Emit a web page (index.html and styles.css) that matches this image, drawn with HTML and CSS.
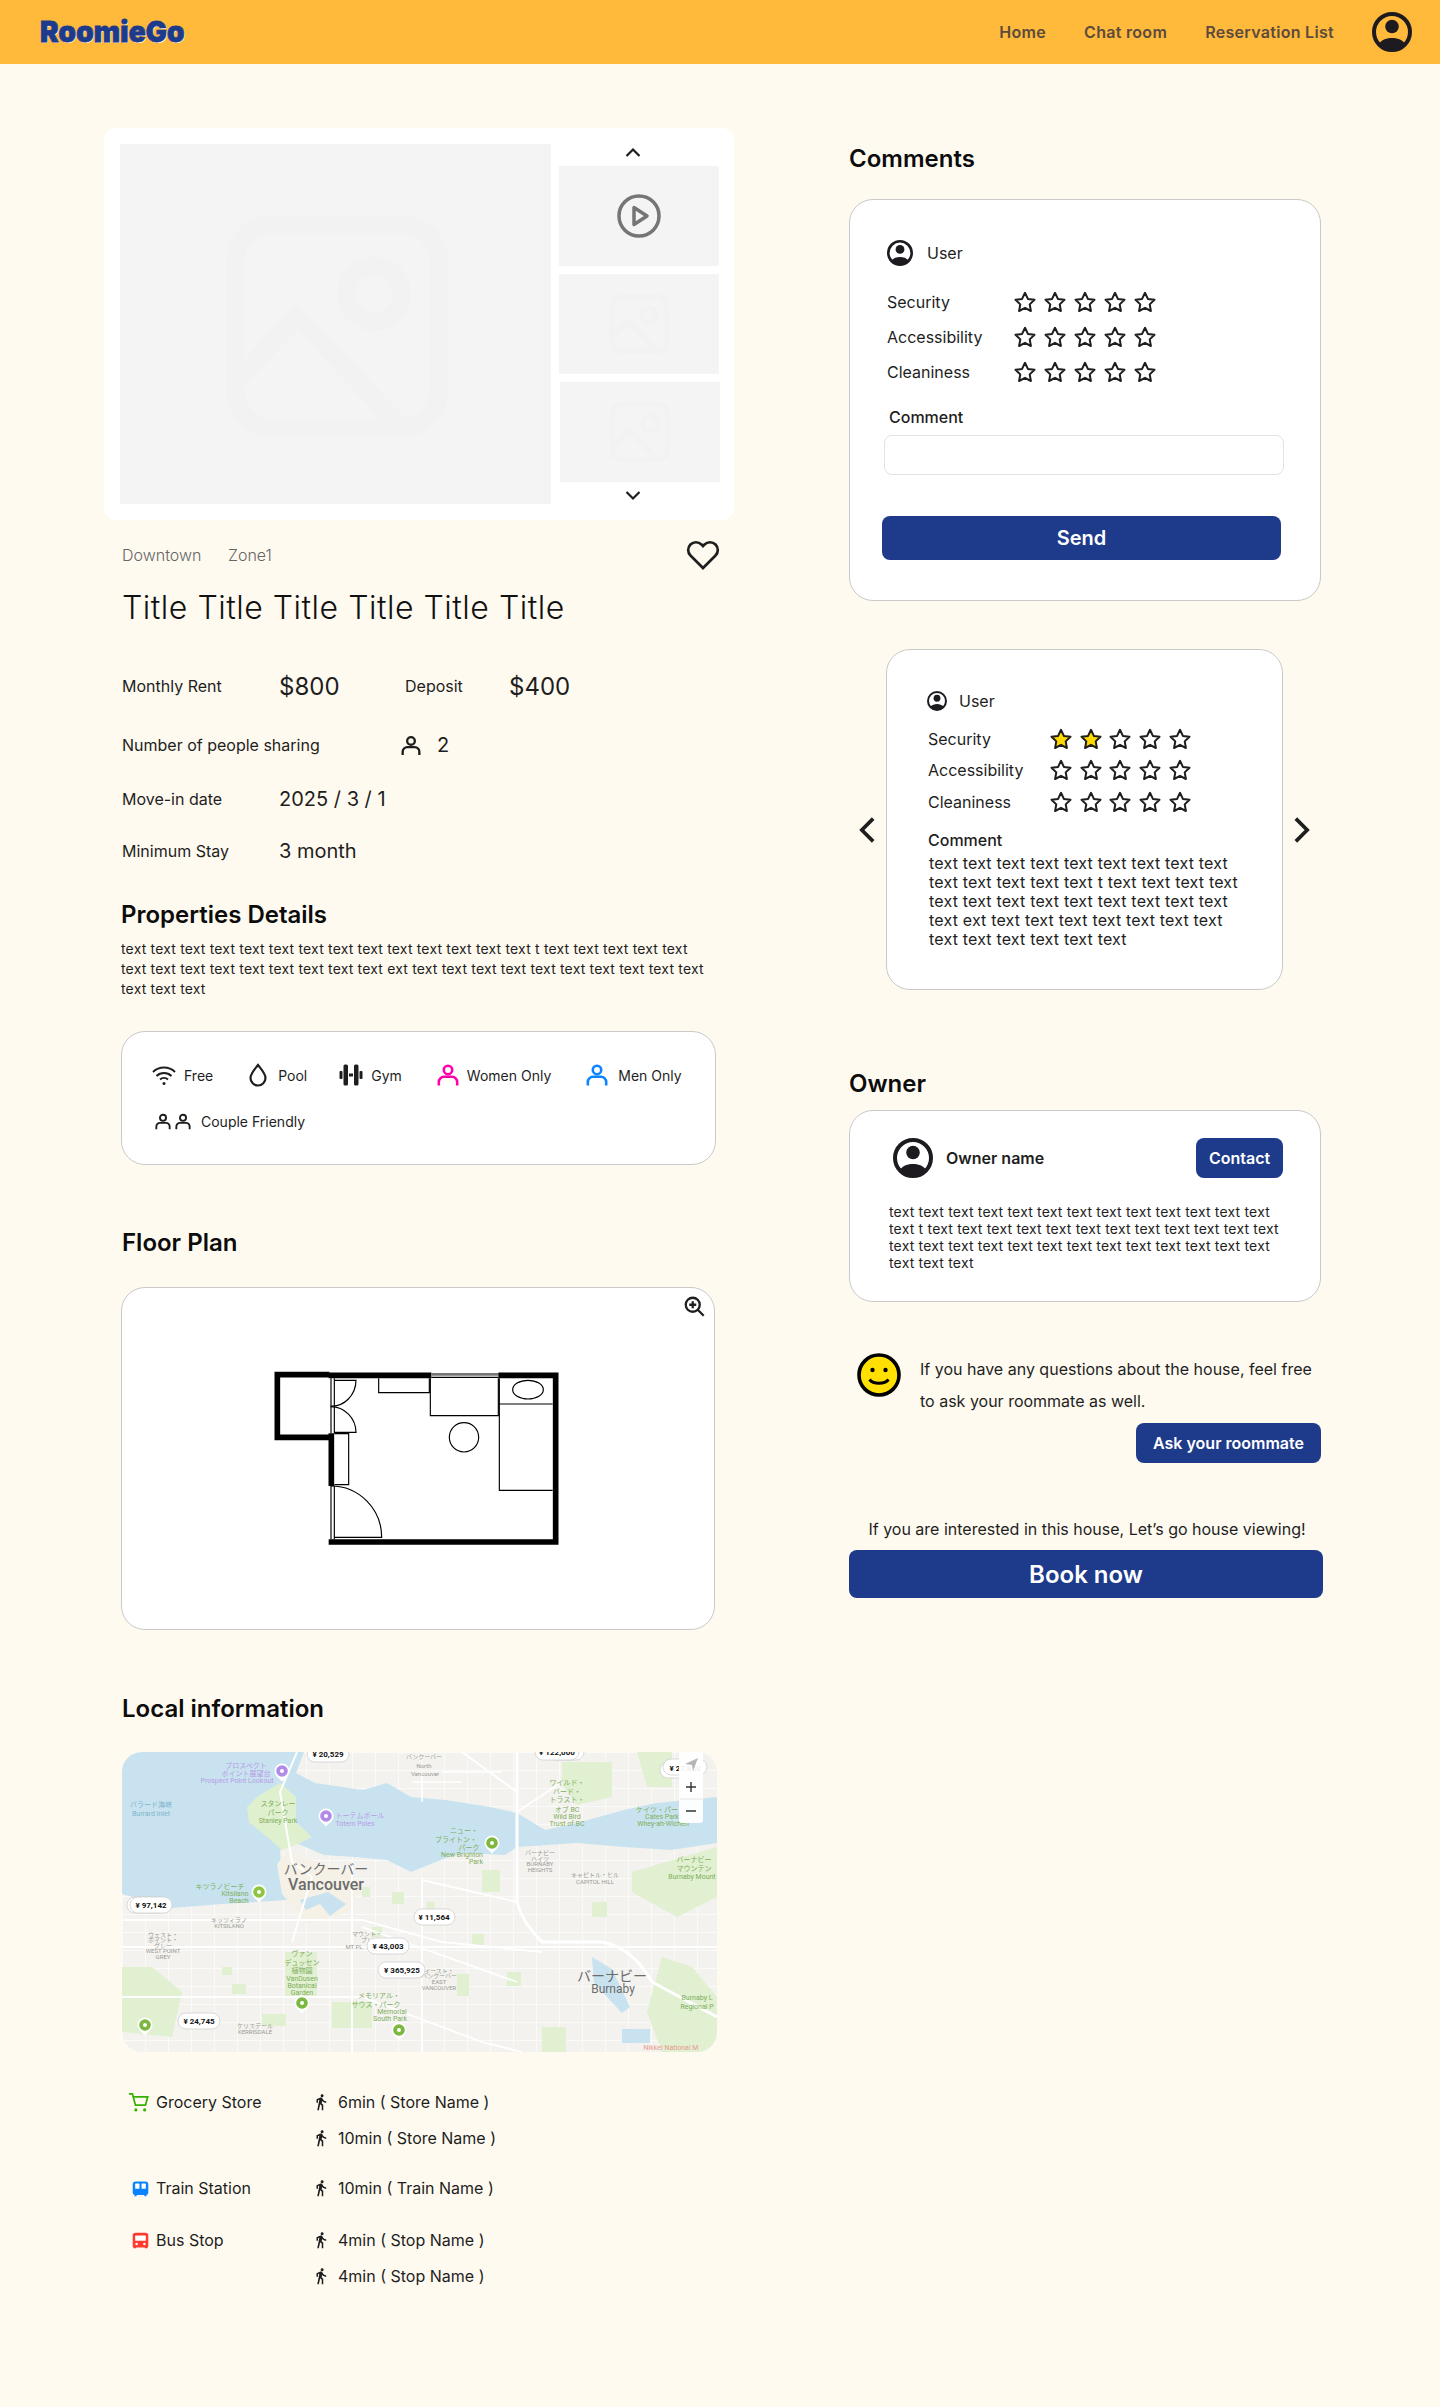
FILE: index.html
```html
<!DOCTYPE html>
<html lang="en">
<head>
    <meta charset="UTF-8">
    <meta name="viewport" content="width=device-width, initial-scale=1.0">
    <title>RoomieGo</title>
    <link rel="stylesheet" href="styles.css">
</head>
<body>
    <svg class="icon-defs" xmlns="http://www.w3.org/2000/svg">
        <symbol id="avatar" viewBox="0 0 40 40">
            <circle cx="20" cy="20" r="18" fill="none" stroke="#1d1b20" stroke-width="4"/>
            <circle cx="20" cy="14.5" r="6.8" fill="#1d1b20"/>
            <path d="M6.5 32C10 27.5 15 26 20 26s10 1.500 13.500 6C30 36 25 38 20 38S10 36 6.500 32z" fill="#1d1b20"/>
        </symbol>
        <symbol id="star" viewBox="0 0 24 24">
            <path d="M12 2.800l2.900 6.100 6.600.9-4.800 4.600 1.200 6.600-5.900-3.200-5.900 3.200 1.200-6.600-4.800-4.600 6.600-.9z" stroke="#1e1e1e" stroke-width="2" stroke-linejoin="round"/>
        </symbol>
        <symbol id="person" viewBox="0 0 24 24">
            <circle cx="12" cy="6.500" r="4.600" fill="none" stroke="currentColor" stroke-width="2.800"/>
            <path d="M2 23.500v-4a5.500 5.500 0 0 1 5.500-5.500h9a5.500 5.500 0 0 1 5.500 5.500v4" fill="none" stroke="currentColor" stroke-width="2.800"/>
        </symbol>
        <symbol id="walk" viewBox="0 0 24 24">
            <path d="M13.500 5.500c1.100 0 2-.9 2-2s-.9-2-2-2-2 .9-2 2 .9 2 2 2zM9.800 8.900L7 23h2.100l1.800-8 2.100 2v6h2v-7.500l-2.100-2 .6-3C14.800 12 16.800 13 19 13v-2c-1.900 0-3.500-1-4.300-2.400l-1-1.600c-.4-.6-1-1-1.700-1-.3 0-.5.1-.8.1L6 8.300V13h2V9.600l1.800-.7" fill="#1e1e1e"/>
        </symbol>
        <symbol id="picture" viewBox="0 0 24 24">
            <g fill="none" stroke="#f2f2f2" stroke-width="2">
                <rect x="1" y="1" width="22" height="22" rx="4"/>
                <circle cx="16" cy="8.500" r="3"/>
                <path d="M1.500 17.500L7.700 11l11.300 12"/>
            </g>
        </symbol>
    </svg>

    <header class="topbar">
        <a class="logo">RoomieGo</a>
        <nav class="nav">
            <a>Home</a>
            <a>Chat room</a>
            <a>Reservation List</a>
            <svg class="nav-avatar"><use href="#avatar"/></svg>
        </nav>
    </header>

    <main class="page">
        <section class="left">
            <div class="gallery">
                <div class="gallery-main">
                    <svg class="placeholder-big"><use href="#picture"/></svg>
                </div>
                <div class="gallery-side">
                    <svg class="chev-small chev-up" viewBox="0 0 16 16"><path d="M1.500 12L8 5.500l6.500 6.500" fill="none" stroke="#1e1e1e" stroke-width="2.200"/></svg>
                    <div class="thumb">
                        <svg class="play" viewBox="0 0 44 44">
                            <circle cx="22" cy="22" r="20" fill="none" stroke="#757575" stroke-width="3.500"/>
                            <path d="M17 13.500L30 22l-13 8.500z" fill="none" stroke="#757575" stroke-width="3.500" stroke-linejoin="round"/>
                        </svg>
                    </div>
                    <div class="thumb"><svg class="placeholder-small"><use href="#picture"/></svg></div>
                    <div class="thumb thumb-last"><svg class="placeholder-small"><use href="#picture"/></svg></div>
                    <svg class="chev-small chev-down" viewBox="0 0 16 16"><path d="M1.500 4L8 10.500 14.500 4" fill="none" stroke="#1e1e1e" stroke-width="2.200"/></svg>
                </div>
            </div>

            <div class="crumbs">
                <span class="crumb-one">Downtown</span>
                <span>Zone1</span>
                <svg class="heart" viewBox="0 0 24 24"><path d="M20.840 4.610a5.500 5.500 0 0 0-7.780 0L12 5.670l-1.060-1.060a5.500 5.500 0 0 0-7.780 7.780l1.060 1.060L12 21.230l7.780-7.780 1.060-1.060a5.500 5.500 0 0 0 0-7.780z" fill="none" stroke="#1e1e1e" stroke-width="1.900"/></svg>
            </div>
            <h1 class="title">Title Title Title Title Title Title</h1>

            <div class="stat stat-rent">
                <span class="stat-label">Monthly Rent</span>
                <span class="stat-price">$800</span>
                <span class="stat-deposit">Deposit</span>
                <span class="stat-price">$400</span>
            </div>
            <div class="stat stat-share">
                <span class="stat-label-wide">Number of people sharing</span>
                <svg class="share-icon"><use href="#person"/></svg>
                <span class="stat-value">2</span>
            </div>
            <div class="stat stat-date">
                <span class="stat-label">Move-in date</span>
                <span class="stat-value">2025 / 3 / 1</span>
            </div>
            <div class="stat stat-stay">
                <span class="stat-label">Minimum Stay</span>
                <span class="stat-value">3 month</span>
            </div>

            <h2 class="heading details-heading">Properties Details</h2>
            <p class="details-text">text text text text text text text text text text text text text text t text text text text text<br>text text text text text text text text text ext text text text text text text text text text text<br>text text text</p>

            <div class="amenities">
                <div class="amenity-row">
                    <span class="amenity am-free">
                        <svg class="am-icon" viewBox="0 0 24 24"><g fill="none" stroke="#1e1e1e" stroke-width="2"><path d="M1 9a16 16 0 0 1 22 0"/><path d="M4.500 13a11 11 0 0 1 15 0"/><path d="M8 16.500a6 6 0 0 1 8 0"/></g><circle cx="12" cy="20.500" r="1.500" fill="#1e1e1e"/></svg>
                        Free
                    </span>
                    <span class="amenity am-pool">
                        <svg class="am-icon" viewBox="0 0 24 24"><path d="M12 2c3 4 7.500 8.500 7.500 13a7.500 7.500 0 0 1-15 0C4.500 10.500 9 6 12 2z" fill="none" stroke="#1e1e1e" stroke-width="2.200"/></svg>
                        Pool
                    </span>
                    <span class="amenity am-gym">
                        <svg class="am-icon" viewBox="0 0 24 24" fill="#1e1e1e"><rect x="0.500" y="8" width="3" height="8" rx="1"/><rect x="4.500" y="1.500" width="4.500" height="21" rx="1.500"/><rect x="10" y="10.500" width="4" height="3"/><rect x="15" y="1.500" width="4.500" height="21" rx="1.500"/><rect x="20.500" y="8" width="3" height="8" rx="1"/></svg>
                        Gym
                    </span>
                    <span class="amenity am-women">
                        <svg class="am-person am-pink"><use href="#person"/></svg>
                        Women Only
                    </span>
                    <span class="amenity am-men">
                        <svg class="am-person am-blue"><use href="#person"/></svg>
                        Men Only
                    </span>
                </div>
                <div class="amenity-row amenity-row-2">
                    <span class="amenity am-couple">
                        <span class="couple-icons">
                            <svg class="am-person-small"><use href="#person"/></svg>
                            <svg class="am-person-small"><use href="#person"/></svg>
                        </span>
                        Couple Friendly
                    </span>
                </div>
            </div>

            <h2 class="heading floor-heading">Floor Plan</h2>
            <div class="floor-card">
                <svg class="zoom-icon" viewBox="0 0 24 24"><circle cx="10" cy="10" r="8" fill="none" stroke="#1e1e1e" stroke-width="2.600"/><path d="M10 6v8M6 10h8M16 16l6.500 6.500" fill="none" stroke="#1e1e1e" stroke-width="2.600"/></svg>
                <svg class="floor-plan" viewBox="-354 54 1776 1023">
                    <g fill="none" stroke="#000">
                        <path d="M268 314H112V502H268" stroke-width="17"/>
                        <path d="M266 316H574" stroke-width="17"/>
                        <path d="M574 313H775" stroke="#777" stroke-width="8"/>
                        <path d="M574 322H775" stroke-width="4"/>
                        <path d="M775 316H947V816H266" stroke-width="17"/>
                        <path d="M274 490V648" stroke-width="17"/>
                        <g stroke-width="3.500">
                            <path d="M273 325V490M283 325V490M273 648V808M283 648V808"/>
                            <path d="M283 331H348A72 78 0 0 1 272 408"/>
                            <path d="M272 410A76 78 0 0 1 348 487H283"/>
                            <path d="M283 491H326V644H283"/>
                            <path d="M272 648A152 154 0 0 1 425 802H283"/>
                            <path d="M416 325V368H568V325"/>
                            <path d="M571 325V437H775V325"/>
                            <circle cx="672" cy="502" r="44"/>
                            <path d="M778 325V661H938M778 402H938"/>
                            <ellipse cx="864" cy="359" rx="46" ry="28"/>
                        </g>
                    </g>
                </svg>
            </div>

            <h2 class="heading local-heading">Local information</h2>
            <div class="map">
                <svg class="map-svg" viewBox="0 0 595 300">
                    <defs>
                        <pattern id="streets" width="23" height="18" patternUnits="userSpaceOnUse">
                            <path d="M0 .5H23M.5 0V18" stroke="#fbfbf9" stroke-width=".9" fill="none"/>
                        </pattern>
                        <g id="pin">
                            <path d="M0 9.500C-3 6-7.500 3.500-7.500 -1a7.500 7.500 0 0 1 15 0C7.500 3.500 3 6 0 9.500z" fill="#fff"/>
                            <circle cy="-1" r="5.800"/>
                            <circle cy="-1" r="2" fill="#fff"/>
                        </g>
                    </defs>
                    <rect width="595" height="300" fill="#f3f2ef"/>
                    <rect width="595" height="300" fill="url(#streets)"/>
                    <g fill="#e0f0d1">
                        <path d="M0 215L30 215 60 240 50 285 0 280z"/>
                        <path d="M163 200h32v45h-32zM210 250h40v26h-40zM140 262h24v12h-24z"/>
                        <path d="M360 118h18v22h-18zM510 120l85-25v50l-40 20-45-25z"/>
                        <path d="M540 205l30 10 25 30v55h-55l-15-40z"/>
                        <path d="M440 10h50v35l-35 8-15-20zM515 0h35v35h-25z"/>
                        <path d="M420 275h24v25h-24zM470 150h15v15h-15zM270 140h12v12h-12zM110 232h14v10h-14zM250 175h10v10h-10zM350 182h12v12h-12zM335 222h12v22h-12zM385 220h14v14h-14zM100 215h10v8h-10zM305 150h8v8h-8zM240 135h8v10h-8z"/>
                    </g>
                    <path d="M0 0H182L174 21 193 31 241 38 265 31 289 45 324 48 368 55 395 61 423 78 455 71 502 58 534 51 595 45V91L549 98 502 95 455 91 395 95 383 103 344 101 324 106 289 120 265 108 233 105 202 103 174 91 158 98 160 130 180 140 165 148 100 152 50 156 0 142z" fill="#c8e3ef"/>
                    <path d="M158 31L174 45 174 70 190 85 176 92 160 98 145 85 127 70 125 55 135 45z" fill="#dff0cf"/>
                    <path d="M165 100l60 20 15 15-15 25-40 12-25-30-5-30z" fill="#f6f1e6"/>
                    <path d="M178 148l28-8 18 12-16 12-10-12-14 6z" fill="#c8e3ef"/>
                    <path d="M470 205l20 12 18 38-8 6-28-30zM500 277h28v14h-28z" fill="#c8e3ef"/>
                    <g fill="none" stroke="#fff">
                        <path d="M175 0L158 40 170 110 190 125 170 190" stroke-width="2"/>
                        <path d="M395 0V150Q400 170 420 190H480Q510 195 530 230L595 265" stroke-width="3"/>
                        <path d="M0 168H240L320 190 420 200M230 110V300M300 128V300M0 245H240L360 290 400 300M240 175L395 230M395 150L300 128M340 0L395 40M440 30L395 60M0 195H595" stroke-width="1.800"/>
                        <path d="M320 20H380M300 20V50M290 30H340" stroke-width="1.500"/>
                    </g>
                    <g class="m-purple">
                        <text x="124" y="16">プロスペクト</text>
                        <text x="124" y="24">ポイント展望台</text>
                        <text x="115" y="31">Prospect Point Lookout</text>
                        <text x="238" y="66">トーテムポール</text>
                        <text x="233" y="74">Totem Poles</text>
                    </g>
                    <g class="m-water">
                        <text x="29" y="55">バラード海峡</text>
                        <text x="29" y="64">Burrard Inlet</text>
                    </g>
                    <g class="m-green">
                        <text x="156" y="54">スタンレー</text>
                        <text x="156" y="63">パーク</text>
                        <text x="156" y="71">Stanley Park</text>
                        <text x="342" y="81">ニュー・</text>
                        <text x="334" y="90">ブライトン・</text>
                        <text x="347" y="98">パーク</text>
                        <text x="340" y="105">New Brighton</text>
                        <text x="354" y="112">Park</text>
                        <text x="98" y="137">キツラノビーチ</text>
                        <text x="113" y="144">Kitsilano</text>
                        <text x="117" y="151">Beach</text>
                        <text x="445" y="33">ワイルド・</text>
                        <text x="445" y="42">バード・</text>
                        <text x="445" y="50">トラスト・</text>
                        <text x="445" y="60">オブ BC</text>
                        <text x="445" y="67">Wild Bird</text>
                        <text x="445" y="74">Trust of BC</text>
                        <text x="535" y="60">ケイツ・パー</text>
                        <text x="540" y="67">Cates Park</text>
                        <text x="541" y="74">Whey-ah-Wichen</text>
                        <text x="572" y="110">バーナビー</text>
                        <text x="572" y="119">マウンテン</text>
                        <text x="570" y="127">Burnaby Mount</text>
                        <text x="180" y="204">ヴァン</text>
                        <text x="180" y="213">デュッセン</text>
                        <text x="180" y="221">植物園</text>
                        <text x="180" y="229">VanDusen</text>
                        <text x="180" y="236">Botanical</text>
                        <text x="180" y="243">Garden</text>
                        <text x="257" y="246">メモリアル・</text>
                        <text x="254" y="255">サウス・パーク</text>
                        <text x="270" y="262">Memorial</text>
                        <text x="268" y="269">South Park</text>
                        <text x="575" y="248">Burnaby L</text>
                        <text x="575" y="257">Regional P</text>
                    </g>
                    <g class="m-grey">
                        <text x="302" y="7">バンクーバー</text>
                        <text x="302" y="16">North</text>
                        <text x="303" y="24">Vancouver</text>
                        <text x="418" y="103">バーナビー</text>
                        <text x="418" y="109">ハイツ</text>
                        <text x="418" y="114">BURNABY</text>
                        <text x="418" y="120">HEIGHTS</text>
                        <text x="473" y="125">キャピトル・ヒル</text>
                        <text x="473" y="132">CAPITOL HILL</text>
                        <text x="107" y="170">キッツィラノ</text>
                        <text x="107" y="176">KITSILANO</text>
                        <text x="41" y="185">ウェスト・</text>
                        <text x="41" y="190">ポイント・</text>
                        <text x="41" y="196">グレー</text>
                        <text x="41" y="201">WEST POINT</text>
                        <text x="41" y="207">GREY</text>
                        <text x="245" y="184">マウント・</text>
                        <text x="245" y="190">プレ</text>
                        <text x="232" y="197">MT PL</text>
                        <text x="317" y="221">イースト・</text>
                        <text x="317" y="226">バンクーバー</text>
                        <text x="317" y="232">EAST</text>
                        <text x="317" y="238">VANCOUVER</text>
                        <text x="133" y="276">ケリスデール</text>
                        <text x="133" y="282">KERRISDALE</text>
                    </g>
                    <g class="m-city">
                        <text x="204" y="122">バンクーバー</text>
                        <text class="m-city-en" x="204" y="138">Vancouver</text>
                        <text x="490" y="229">バーナビー</text>
                        <text class="m-burnaby" x="491" y="241">Burnaby</text>
                    </g>
                    <text class="m-red" x="549" y="298">Nikkei National M</text>
                    <use href="#pin" x="160" y="20" fill="#b28be8"/>
                    <use href="#pin" x="204" y="65" fill="#b28be8"/>
                    <use href="#pin" x="370" y="92" fill="#7cb83f"/>
                    <use href="#pin" x="137" y="141" fill="#8cc63f"/>
                    <use href="#pin" x="180" y="252" fill="#7cb83f"/>
                    <use href="#pin" x="277" y="279" fill="#7cb83f"/>
                    <use href="#pin" x="23" y="274" fill="#7cb83f"/>
                    <g class="m-pills">
                        <rect x="5" y="145" width="42" height="16" rx="8"/>
                        <rect x="8" y="145" width="42" height="16" rx="8"/>
                        <text x="29" y="156">¥ 97,142</text>
                        <rect x="292" y="157" width="41" height="16" rx="8"/>
                        <text x="312" y="168">¥ 11,564</text>
                        <rect x="245" y="186" width="42" height="16" rx="8"/>
                        <text x="266" y="197">¥ 43,003</text>
                        <rect x="256" y="210" width="47" height="16" rx="8"/>
                        <text x="280" y="221">¥ 365,925</text>
                        <rect x="56" y="261" width="42" height="16" rx="8"/>
                        <text x="77" y="272">¥ 24,745</text>
                        <rect x="185" y="-6" width="42" height="16" rx="8"/>
                        <text x="206" y="5">¥ 20,529</text>
                        <rect x="425" y="-8" width="37" height="16" rx="8"/>
                        <rect x="413" y="-8" width="44" height="16" rx="8"/>
                        <text x="435" y="3">¥ 122,000</text>
                        <rect x="538" y="10" width="44" height="16" rx="8"/>
                        <rect x="541" y="7" width="44" height="16" rx="8"/>
                        <text x="563" y="19">¥ 27,808</text>
                    </g>
                    <g>
                        <rect x="557" y="-6" width="24" height="77" rx="3" fill="#fff" fill-opacity=".93"/>
                        <path d="M558 47H580" stroke="#e4e4e4"/>
                        <path d="M563 12L576 6 571 19 570 13z" fill="#b5b5b5"/>
                        <path d="M569 30V40M564 35H574M564 59H574" stroke="#333" stroke-width="1.400"/>
                    </g>
                </svg>
            </div>

            <div class="places">
                <div class="place">
                    <div class="place-name">
                        <svg class="place-icon cart" viewBox="0 0 24 24"><path d="M1 2h4l3.500 13h11.500l2.500-9.500H6" fill="none" stroke="#35b000" stroke-width="2"/><circle cx="9" cy="20.500" r="1.800" fill="#35b000"/><circle cx="19" cy="20.500" r="1.800" fill="#35b000"/></svg>
                        Grocery Store
                    </div>
                    <div class="place-times">
                        <div class="time"><svg class="walk"><use href="#walk"/></svg>6min ( Store Name )</div>
                        <div class="time"><svg class="walk"><use href="#walk"/></svg>10min ( Store Name )</div>
                    </div>
                </div>
                <div class="place">
                    <div class="place-name">
                        <svg class="place-icon" viewBox="0 0 24 24"><path d="M5 2h14a4 4 0 0 1 4 4v12a3 3 0 0 1-3 3l1 2h-3l-1-2H7l-1 2H3l1-2a3 3 0 0 1-3-3V6a4 4 0 0 1 4-4z" fill="#0a84ff"/><rect x="4.500" y="5" width="6" height="7.500" rx="1" fill="#fff"/><rect x="13.500" y="5" width="6" height="7.500" rx="1" fill="#fff"/></svg>
                        Train Station
                    </div>
                    <div class="place-times">
                        <div class="time"><svg class="walk"><use href="#walk"/></svg>10min ( Train Name )</div>
                    </div>
                </div>
                <div class="place">
                    <div class="place-name">
                        <svg class="place-icon" viewBox="0 0 24 24"><path d="M5 1h14a4 4 0 0 1 4 4v15a2 2 0 0 1-1 1.700V23h-4v-1H6v1H2v-1.300A2 2 0 0 1 1 20V5a4 4 0 0 1 4-4z" fill="#ff3b30"/><rect x="4.500" y="5" width="15" height="7.500" rx="1" fill="#fff"/><circle cx="6.500" cy="17" r="1.700" fill="#fff"/><circle cx="17.500" cy="17" r="1.700" fill="#fff"/></svg>
                        Bus Stop
                    </div>
                    <div class="place-times">
                        <div class="time"><svg class="walk"><use href="#walk"/></svg>4min ( Stop Name )</div>
                        <div class="time"><svg class="walk"><use href="#walk"/></svg>4min ( Stop Name )</div>
                    </div>
                </div>
            </div>
        </section>

        <aside class="right">
            <h2 class="heading">Comments</h2>
            <div class="card comment-form">
                <div class="user-row">
                    <svg class="user-icon"><use href="#avatar"/></svg>
                    <span>User</span>
                </div>
                <div class="rating">
                    <span class="rating-label">Security</span>
                    <span class="stars">
                        <svg class="star"><use href="#star"/></svg><svg class="star"><use href="#star"/></svg><svg class="star"><use href="#star"/></svg><svg class="star"><use href="#star"/></svg><svg class="star"><use href="#star"/></svg>
                    </span>
                </div>
                <div class="rating">
                    <span class="rating-label">Accessibility</span>
                    <span class="stars">
                        <svg class="star"><use href="#star"/></svg><svg class="star"><use href="#star"/></svg><svg class="star"><use href="#star"/></svg><svg class="star"><use href="#star"/></svg><svg class="star"><use href="#star"/></svg>
                    </span>
                </div>
                <div class="rating">
                    <span class="rating-label">Cleaniness</span>
                    <span class="stars">
                        <svg class="star"><use href="#star"/></svg><svg class="star"><use href="#star"/></svg><svg class="star"><use href="#star"/></svg><svg class="star"><use href="#star"/></svg><svg class="star"><use href="#star"/></svg>
                    </span>
                </div>
                <label class="comment-label">Comment</label>
                <input class="comment-input" type="text">
                <button class="btn send-btn" type="button">Send</button>
            </div>

            <div class="carousel">
                <svg class="carousel-chev" viewBox="0 0 24 24"><path d="M16 4l-8 8 8 8" fill="none" stroke="#1e1e1e" stroke-width="2.600"/></svg>
                <div class="card review">
                    <div class="review-user">
                        <svg class="review-avatar"><use href="#avatar"/></svg>
                        <span>User</span>
                    </div>
                    <div class="rating review-rating">
                        <span class="review-label">Security</span>
                        <span class="stars review-stars">
                            <svg class="star star-on"><use href="#star"/></svg><svg class="star star-on"><use href="#star"/></svg><svg class="star"><use href="#star"/></svg><svg class="star"><use href="#star"/></svg><svg class="star"><use href="#star"/></svg>
                        </span>
                    </div>
                    <div class="rating review-rating">
                        <span class="review-label">Accessibility</span>
                        <span class="stars review-stars">
                            <svg class="star"><use href="#star"/></svg><svg class="star"><use href="#star"/></svg><svg class="star"><use href="#star"/></svg><svg class="star"><use href="#star"/></svg><svg class="star"><use href="#star"/></svg>
                        </span>
                    </div>
                    <div class="rating review-rating">
                        <span class="review-label">Cleaniness</span>
                        <span class="stars review-stars">
                            <svg class="star"><use href="#star"/></svg><svg class="star"><use href="#star"/></svg><svg class="star"><use href="#star"/></svg><svg class="star"><use href="#star"/></svg><svg class="star"><use href="#star"/></svg>
                        </span>
                    </div>
                    <div class="review-title">Comment</div>
                    <p class="review-text">text text text text text text text text text<br>text text text text text t text text text text<br>text text text text text text text text text<br>text ext text text text text text text text<br>text text text text text text</p>
                </div>
                <svg class="carousel-chev" viewBox="0 0 24 24"><path d="M8 4l8 8-8 8" fill="none" stroke="#1e1e1e" stroke-width="2.600"/></svg>
            </div>

            <h2 class="heading owner-heading">Owner</h2>
            <div class="card owner-card">
                <div class="owner-top">
                    <svg class="owner-avatar"><use href="#avatar"/></svg>
                    <span class="owner-name">Owner name</span>
                    <button class="btn contact-btn" type="button">Contact</button>
                </div>
                <p class="owner-text">text text text text text text text text text text text text text<br>text t text text text text text text text text text text text text<br>text text text text text text text text text text text text text<br>text text text</p>
            </div>

            <div class="ask">
                <svg class="smile" viewBox="0 0 44 44">
                    <circle cx="22" cy="22" r="20" fill="#ffe000" stroke="#000" stroke-width="3.600"/>
                    <circle cx="15.500" cy="17" r="2.200" fill="#000"/>
                    <circle cx="28.500" cy="17" r="2.200" fill="#000"/>
                    <path d="M12.500 26.500c4 5 15 5 19 0" fill="none" stroke="#000" stroke-width="3"/>
                </svg>
                <p class="ask-text">If you have any questions about the house, feel free<br>to ask your roommate as well.</p>
            </div>
            <button class="btn ask-btn" type="button">Ask your roommate</button>

            <p class="book-text">If you are interested in this house, Let’s go house viewing!</p>
            <button class="btn book-btn" type="button">Book now</button>
        </aside>
    </main>
</body>
</html>
```

FILE: styles.css
```css
* {
    box-sizing: border-box;
}
body {
    margin: 0;
    background-color: #fffaf0;
    color: #1e1e1e;
    font-family: "Inter", "Liberation Sans", sans-serif;
    font-size: 16px;
}
p, h1, h2 {
    margin: 0;
}
.icon-defs {
    display: none;
}

/* top bar */
.topbar {
    height: 64px;
    background-color: #ffb93b;
    display: flex;
    align-items: center;
    justify-content: space-between;
    padding: 0 28px 0 40px;
}
.logo {
    font-size: 28px;
    font-weight: 900;
    letter-spacing: 0.1px;
    color: #1e3a8a;
    text-shadow: 1px 1px 0 #fff;
    -webkit-text-stroke: 0.8px #1e3a8a;
}
.nav {
    display: flex;
    align-items: center;
    gap: 38px;
    font-size: 16px;
    font-weight: 600;
    letter-spacing: 0.3px;
    color: #5c4a3d;
}
.nav-avatar {
    width: 40px;
    height: 40px;
}

/* columns */
.page {
    display: flex;
    gap: 115px;
    padding: 0 0 113px 104px;
}
.left {
    width: 630px;
    padding-top: 64px;
}
.right {
    width: 474px;
    padding-top: 79px;
}

/* gallery */
.gallery {
    display: flex;
    gap: 8px;
    height: 392px;
    padding: 16px 14px 16px 16px;
    background: #fff;
    border-radius: 12px;
}
.gallery-main {
    width: 431px;
    height: 360px;
    background: #f4f4f4;
    display: flex;
    align-items: center;
    justify-content: center;
}
.placeholder-big {
    width: 222px;
    height: 226px;
    margin-left: 2px;
    margin-top: 4px;
}
.gallery-side {
    width: 161px;
    display: flex;
    flex-direction: column;
    align-items: flex-start;
}
.chev-small {
    width: 16px;
    height: 16px;
    margin-left: 66px;
}
.chev-up {
    margin-bottom: 6px;
}
.chev-down {
    margin-top: 6px;
}
.thumb {
    width: 160px;
    height: 100px;
    margin-bottom: 8px;
    background: #f4f4f4;
    display: flex;
    align-items: center;
    justify-content: center;
}
.thumb-last {
    margin: 0 0 0 1px;
}
.play {
    width: 44px;
    height: 44px;
}
.placeholder-small {
    width: 62px;
    height: 60px;
}

/* listing info */
.crumbs {
    display: flex;
    align-items: center;
    height: 32px;
    margin: 19px 0 0 18px;
    font-weight: 300;
    color: #666;
}
.crumb-one {
    width: 106px;
}
.heart {
    width: 34px;
    height: 34px;
    margin-left: auto;
    margin-right: 14px;
}
.title {
    margin: 17px 0 0 18px;
    font-size: 32px;
    line-height: 40px;
    font-weight: 300;
    letter-spacing: 0.5px;
    color: #111;
}
.stat {
    display: flex;
    align-items: center;
    height: 32px;
    margin-left: 18px;
}
.stat-rent {
    margin-top: 42px;
}
.stat-share {
    margin-top: 27px;
}
.stat-date {
    margin-top: 22px;
}
.stat-stay {
    margin-top: 20px;
}
.stat-label {
    width: 157px;
}
.stat-label-wide {
    width: 279px;
}
.stat-price {
    width: 68px;
    font-size: 24px;
}
.stat-deposit {
    width: 104px;
    margin-left: 58px;
}
.stat-price:last-child {
    width: auto;
}
.stat-value {
    font-size: 20px;
}
.share-icon {
    width: 20px;
    height: 21px;
    margin-right: 16px;
}
.heading {
    font-size: 24px;
    line-height: 32px;
    font-weight: 600;
    color: #0c0c0c;
}
.details-heading {
    margin: 32px 0 0 17px;
}
.details-text {
    margin: 8px 0 0 17px;
    font-size: 14px;
    line-height: 20px;
    letter-spacing: 0.17px;
}

/* amenities */
.amenities {
    width: 595px;
    height: 134px;
    margin: 32px 0 0 17px;
    padding: 27px 0 0 30px;
    background: #fff;
    border: 1px solid #c9c9c9;
    border-radius: 24px;
    font-size: 14px;
}
.amenity-row {
    display: flex;
    align-items: center;
    height: 32px;
}
.amenity-row-2 {
    margin-top: 14px;
}
.amenity {
    display: flex;
    align-items: center;
}
.am-icon {
    width: 24px;
    height: 24px;
    margin-right: 8px;
}
.am-pool {
    margin-left: 33px;
}
.am-gym {
    margin-left: 32px;
}
.am-women {
    margin-left: 35px;
}
.am-person {
    width: 22px;
    height: 22px;
    margin-right: 8px;
}
.am-pink {
    color: #ff00a8;
}
.am-blue {
    color: #0a84ff;
}
.am-men {
    margin-left: 35px;
}
.am-men .am-person {
    margin-right: 10px;
}
.am-couple {
    margin-left: 3px;
}
.couple-icons {
    display: flex;
    gap: 4px;
    margin-right: 10px;
}
.am-person-small {
    width: 16px;
    height: 17px;
}

/* floor plan */
.floor-heading {
    margin: 62px 0 0 18px;
}
.floor-card {
    position: relative;
    width: 594px;
    height: 343px;
    margin: 28px 0 0 17px;
    background: #fff;
    border: 1px solid #c9c9c9;
    border-radius: 24px;
    overflow: hidden;
}
.floor-plan {
    display: block;
    width: 592px;
    height: 341px;
}
.zoom-icon {
    position: absolute;
    top: 8px;
    right: 9px;
    width: 21px;
    height: 21px;
}

/* map */
.local-heading {
    margin: 63px 0 0 18px;
}
.map {
    width: 595px;
    height: 300px;
    margin: 27px 0 0 18px;
    border-radius: 20px;
    overflow: hidden;
}
.map-svg {
    display: block;
    width: 595px;
    height: 300px;
    font-family: "Roboto", "Noto Sans CJK JP", sans-serif;
    font-size: 7px;
    text-anchor: middle;
}
.m-purple {
    fill: #b79be6;
}
.m-water {
    fill: #7fb3cc;
}
.m-green {
    fill: #7fae5a;
}
.m-grey {
    fill: #9a9a94;
    font-size: 6px;
}
.m-city {
    fill: #6c6c6c;
    font-size: 14px;
}
.m-city-en {
    font-size: 16px;
    font-weight: 500;
}
.m-burnaby {
    font-size: 12px;
}
.m-red {
    fill: #e79a8f;
    font-size: 7px;
}
.m-pills rect {
    fill: #fff;
    stroke: #cfcfcf;
    stroke-width: 0.8;
}
.m-pills text {
    fill: #111;
    font-size: 8px;
    font-weight: 700;
}

/* nearby places */
.places {
    margin: 32px 0 0 24px;
}
.place {
    display: flex;
    margin-bottom: 16px;
}
.place:first-child {
    margin-bottom: 14px;
}
.place-name {
    display: flex;
    align-items: center;
    width: 186px;
    height: 36px;
}
.place-icon {
    width: 17px;
    height: 17px;
    margin: 0 7px 0 4px;
}
.cart {
    width: 21px;
    height: 21px;
    margin: 0 7px 0 0;
}
.time {
    display: flex;
    align-items: center;
    height: 36px;
}
.walk {
    width: 18px;
    height: 20px;
    margin-right: 8px;
    margin-left: -2px;
}

/* right column */
.card {
    background: #fff;
    border: 1px solid #c9c9c9;
    border-radius: 24px;
}
.comment-form {
    width: 472px;
    height: 402px;
    margin-top: 24px;
    padding: 37px 0 0 37px;
}
.user-row {
    display: flex;
    align-items: center;
    gap: 14px;
    height: 32px;
}
.user-icon {
    width: 26px;
    height: 26px;
}
.rating {
    display: flex;
    align-items: center;
    height: 35px;
}
.user-row + .rating {
    margin-top: 15px;
}
.rating-label {
    width: 126px;
}
.stars {
    display: flex;
    gap: 6px;
}
.star {
    width: 24px;
    height: 24px;
    fill: none;
}
.star-on {
    fill: #ffd900;
}
.comment-label {
    display: block;
    margin: 18px 0 0 2px;
    line-height: 20px;
    font-weight: 500;
}
.comment-input {
    display: block;
    width: 400px;
    height: 40px;
    margin: 8px 0 0 -3px;
    background: #fff;
    border: 1px solid #e3e3e3;
    border-radius: 8px;
}
.btn {
    border: 0;
    border-radius: 8px;
    background: #1e3a8a;
    color: #fff;
    font-family: inherit;
    font-weight: 600;
}
.send-btn {
    display: block;
    width: 399px;
    height: 44px;
    margin: 41px 0 0 -5px;
    font-size: 20px;
}

/* review carousel */
.carousel {
    display: flex;
    align-items: center;
    justify-content: space-between;
    width: 471px;
    margin-top: 48px;
}
.carousel-chev {
    width: 37px;
    height: 34px;
    margin-top: 21px;
}
.review {
    width: 397px;
    height: 341px;
    padding: 39px 0 0 41px;
}
.review-user {
    display: flex;
    align-items: center;
    gap: 12px;
    height: 24px;
    margin-left: -1px;
}
.review-avatar {
    width: 20px;
    height: 20px;
}
.review-rating {
    height: 31.500px;
}
.review-user + .review-rating {
    margin-top: 10px;
}
.review-label {
    width: 121px;
}
.review-stars {
    gap: 5.700px;
}
.review-title {
    margin-top: 12px;
    line-height: 20px;
    font-weight: 500;
}
.review-text {
    margin: 4px 0 0 1px;
    line-height: 19px;
    letter-spacing: 0.18px;
}

/* owner */
.owner-heading {
    margin-top: 78px;
}
.owner-card {
    width: 472px;
    height: 192px;
    margin-top: 10px;
    padding: 27px 37px 0 43px;
}
.owner-top {
    display: flex;
    align-items: center;
}
.owner-avatar {
    width: 40px;
    height: 40px;
    margin-right: 13px;
}
.owner-name {
    font-weight: 600;
}
.contact-btn {
    width: 87px;
    height: 40px;
    margin-left: auto;
    font-size: 16px;
}
.owner-text {
    margin: 25px -20px 0 -4px;
    font-size: 14px;
    line-height: 17px;
    letter-spacing: 0.18px;
}
.ask {
    display: flex;
    margin: 51px 0 0 8px;
}
.smile {
    width: 44px;
    height: 44px;
    margin-right: 19px;
}
.ask-text {
    line-height: 32px;
}
.ask-btn {
    display: block;
    width: 185px;
    height: 40px;
    margin: 6px 0 0 287px;
    font-size: 16px;
}
.book-text {
    margin: 56px 0 0 2px;
    line-height: 20px;
    text-align: center;
}
.book-btn {
    display: block;
    width: 474px;
    height: 48px;
    margin-top: 11px;
    font-size: 24px;
}
```
